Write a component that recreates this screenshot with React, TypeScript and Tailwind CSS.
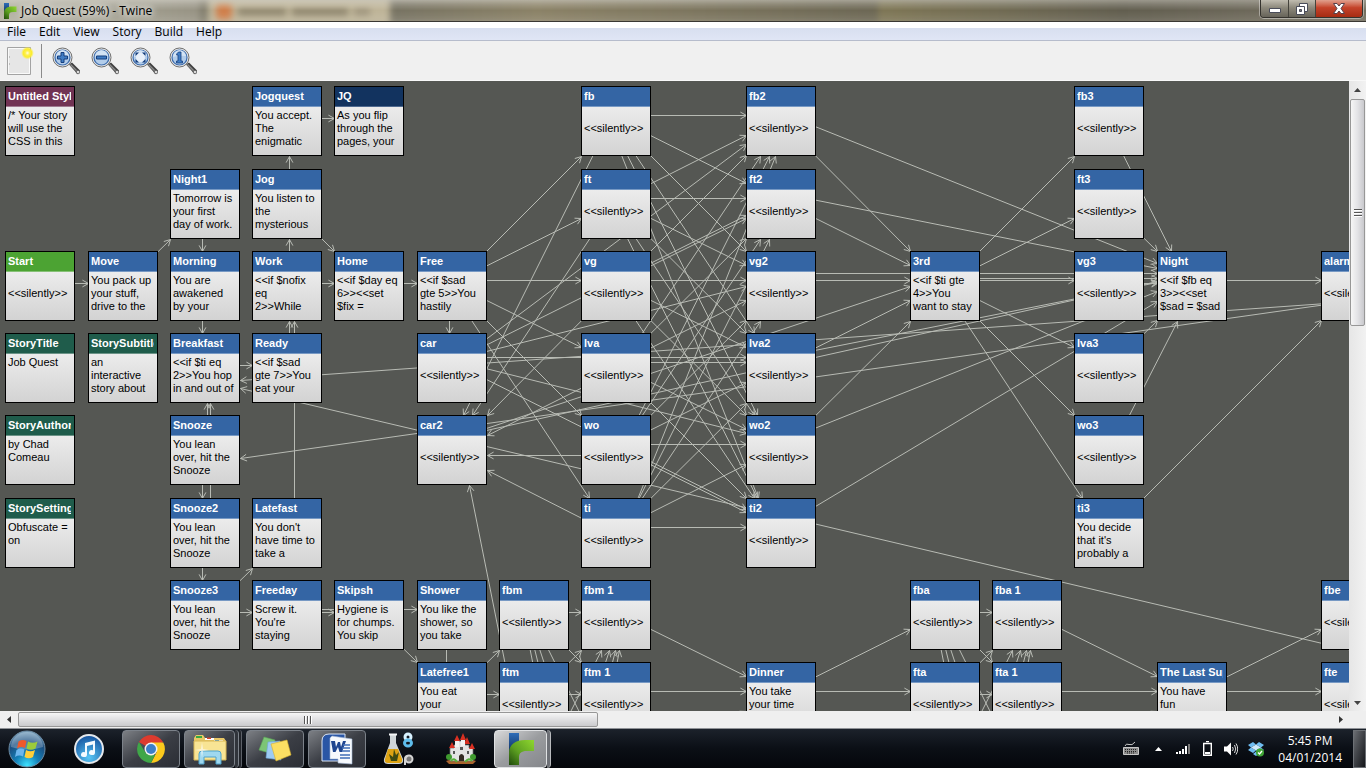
import type { ReactNode } from "react";

/* ─── Story map data ─── */
const STEP = [
  5, 88, 170, 252, 334, 417, 499, 581, 663, 746, 828, 910, 992, 1074, 1157, 1239, 1321, 1404, 1486,
  1568, 1650, 1733, 1815,
];
const SIZE = 70;
const SILENT = "\n<<silently>>";

type Kind = "passage" | "start" | "info" | "style" | "ending";

interface Passage {
  title: string;
  col: number;
  row: number;
  body?: string;
  kind?: Kind;
}

const passages: Passage[] = [
  { title: "Untitled Stylesheet", col: 0, row: 0, kind: "style", body: "/* Your story\nwill use the\nCSS in this" },
  { title: "Jogquest", col: 3, row: 0, body: "You accept.\nThe\nenigmatic" },
  { title: "JQ", col: 4, row: 0, kind: "ending", body: "As you flip\nthrough the\npages, your" },
  { title: "fb", col: 7, row: 0 },
  { title: "fb2", col: 9, row: 0 },
  { title: "fb3", col: 13, row: 0 },

  { title: "Night1", col: 2, row: 1, body: "Tomorrow is\nyour first\nday of work." },
  { title: "Jog", col: 3, row: 1, body: "You listen to\nthe\nmysterious" },
  { title: "ft", col: 7, row: 1 },
  { title: "ft2", col: 9, row: 1 },
  { title: "ft3", col: 13, row: 1 },

  { title: "Start", col: 0, row: 2, kind: "start" },
  { title: "Move", col: 1, row: 2, body: "You pack up\nyour stuff,\ndrive to the" },
  { title: "Morning", col: 2, row: 2, body: "You are\nawakened\nby your" },
  { title: "Work", col: 3, row: 2, body: "<<if $nofix\neq\n2>>While" },
  { title: "Home", col: 4, row: 2, body: "<<if $day eq\n6>><<set\n$fix =" },
  { title: "Free", col: 5, row: 2, body: "<<if $sad\ngte 5>>You\nhastily" },
  { title: "vg", col: 7, row: 2 },
  { title: "vg2", col: 9, row: 2 },
  { title: "3rd", col: 11, row: 2, body: "<<if $ti gte\n4>>You\nwant to stay" },
  { title: "vg3", col: 13, row: 2 },
  { title: "Night", col: 14, row: 2, body: "<<if $fb eq\n3>><<set\n$sad = $sad" },
  { title: "alarm", col: 16, row: 2 },

  { title: "StoryTitle", col: 0, row: 3, kind: "info", body: "Job Quest" },
  { title: "StorySubtitle", col: 1, row: 3, kind: "info", body: "an\ninteractive\nstory about" },
  { title: "Breakfast", col: 2, row: 3, body: "<<if $ti eq\n2>>You hop\nin and out of" },
  { title: "Ready", col: 3, row: 3, body: "<<if $sad\ngte 7>>You\neat your" },
  { title: "car", col: 5, row: 3 },
  { title: "lva", col: 7, row: 3 },
  { title: "lva2", col: 9, row: 3 },
  { title: "lva3", col: 13, row: 3 },

  { title: "StoryAuthor", col: 0, row: 4, kind: "info", body: "by Chad\nComeau" },
  { title: "Snooze", col: 2, row: 4, body: "You lean\nover, hit the\nSnooze" },
  { title: "car2", col: 5, row: 4 },
  { title: "wo", col: 7, row: 4 },
  { title: "wo2", col: 9, row: 4 },
  { title: "wo3", col: 13, row: 4 },

  { title: "StorySettings", col: 0, row: 5, kind: "info", body: "Obfuscate =\non" },
  { title: "Snooze2", col: 2, row: 5, body: "You lean\nover, hit the\nSnooze" },
  { title: "Latefast", col: 3, row: 5, body: "You don't\nhave time to\ntake a" },
  { title: "ti", col: 7, row: 5 },
  { title: "ti2", col: 9, row: 5 },
  { title: "ti3", col: 13, row: 5, body: "You decide\nthat it's\nprobably a" },

  { title: "Snooze3", col: 2, row: 6, body: "You lean\nover, hit the\nSnooze" },
  { title: "Freeday", col: 3, row: 6, body: "Screw it.\nYou're\nstaying" },
  { title: "Skipsh", col: 4, row: 6, body: "Hygiene is\nfor chumps.\nYou skip" },
  { title: "Shower", col: 5, row: 6, body: "You like the\nshower, so\nyou take" },
  { title: "fbm", col: 6, row: 6 },
  { title: "fbm 1", col: 7, row: 6 },
  { title: "fba", col: 11, row: 6 },
  { title: "fba 1", col: 12, row: 6 },
  { title: "fbe", col: 16, row: 6 },

  { title: "Latefree1", col: 5, row: 7, body: "You eat\nyour" },
  { title: "ftm", col: 6, row: 7 },
  { title: "ftm 1", col: 7, row: 7 },
  { title: "Dinner", col: 9, row: 7, body: "You take\nyour time" },
  { title: "fta", col: 11, row: 7 },
  { title: "fta 1", col: 12, row: 7 },
  { title: "The Last Supper", col: 14, row: 7, body: "You have\nfun" },
  { title: "fte", col: 16, row: 7 },
];

type Cell = [col: number, row: number];
type Link = [from: Cell, to: Cell];

const NIGHT: Cell = [14, 2];
const THIRD: Cell = [11, 2];
const FREE: Cell = [5, 2];
const CAR: Cell = [5, 3];
const CAR2: Cell = [5, 4];

const links: Link[] = [
  [[0, 2], [1, 2]],
  [[1, 2], [2, 1]],
  [[2, 1], [2, 2]],
  [[2, 2], [2, 3]],
  [[2, 3], [3, 3]],
  [[2, 4], [2, 3]],
  [[2, 5], [2, 3]],
  [[2, 4], [2, 5]],
  [[2, 5], [2, 6]],
  [[2, 6], [3, 6]],
  [[2, 6], [3, 5]],
  [[3, 5], [3, 2]],
  [[3, 3], [3, 2]],
  [[3, 2], [3, 1]],
  [[3, 2], [4, 2]],
  [[3, 1], [3, 0]],
  [[3, 1], [4, 2]],
  [[3, 0], [4, 0]],
  [[4, 2], FREE],
  [FREE, CAR],
  [CAR2, THIRD],
  [CAR2, NIGHT],
  [THIRD, NIGHT],
  [NIGHT, [16, 2]],
  [[13, 5], [16, 2]],
  [[16, 2], [2, 3]],
  [[16, 2], [2, 4]],
  [[19, 7], [2, 3]],
  [[6, 9], CAR2],
  [[3, 6], [4, 6]],
  [[3, 6], [5, 6]],
  [[4, 6], [5, 7]],
  [[5, 6], [5, 8]],
];

for (let r = 0; r < 6; r++) {
  links.push([FREE, [7, r]], [CAR, [9, r]], [[7, r], CAR2]);
  links.push([[9, r], NIGHT], [THIRD, [13, r]]);
  if (r < 5) links.push([[9, r], THIRD], [[13, r], NIGHT]);
  for (let s = 0; s < 6; s++) {
    links.push([[7, r], [9, s]], [[6, r + 6], [7, s + 6]], [[11, r + 6], [12, s + 6]]);
  }
}
for (let r = 6; r < 9; r++) {
  links.push([[5, 7], [6, r]], [[7, r], [9, 7]], [[9, 7], [11, r]]);
  links.push([[12, r], [14, 7]], [[14, 7], [16, r]]);
}

/* ─── Connectors ─── */
function connectorPath([from, to]: Link) {
  let ax = STEP[from[0]] + SIZE / 2;
  let ay = STEP[from[1]] + SIZE / 2;
  let bx = STEP[to[0]] + SIZE / 2;
  let by = STEP[to[1]] + SIZE / 2;

  // nudge each direction to its own side so two-way links stay apart
  const nudge = Math.min(Math.hypot(bx - ax, by - ay) / 32, 16);
  const sx = Math.sign(ay - by) * nudge;
  const sy = Math.sign(ax - bx) * nudge;
  ax += sx;
  bx += sx;
  ay += sy;
  by += sy;

  // stop at the edge of the target box
  const dx = bx - ax;
  const dy = by - ay;
  const left = STEP[to[0]];
  const top = STEP[to[1]];
  const tx = dx ? ((dx > 0 ? left : left + SIZE) - ax) / dx : 0;
  const ty = dy ? ((dy > 0 ? top : top + SIZE) - ay) / dy : 0;
  const t = Math.max(tx, ty);
  const ex = Math.floor(ax + dx * t) + 0.5;
  const ey = Math.floor(ay + dy * t) + 0.5;

  const angle = Math.atan2(dy, dx);
  const wing = (turn: number) =>
    `${(ex - 7 * Math.cos(angle + turn)).toFixed(1)} ${(ey - 7 * Math.sin(angle + turn)).toFixed(1)}`;

  return `M${Math.floor(ax) + 0.5} ${Math.floor(ay) + 0.5}L${ex} ${ey}M${wing(0.5)}L${ex} ${ey}L${wing(-0.5)}`;
}

function Connectors() {
  return (
    <svg className="absolute left-0 top-0 h-[1000px] w-[1900px]" fill="none" stroke="#b8bbb4">
      {links.map((link, i) => (
        <path key={i} d={connectorPath(link)} />
      ))}
    </svg>
  );
}

/* ─── Passage box ─── */
const titleColors: Record<Kind, string> = {
  passage: "bg-[#3465a4] border-[#7799c4]",
  start: "bg-[#4ca333] border-[#86c176]",
  info: "bg-[#1f5c4b] border-[#6b9387]",
  style: "bg-[#713353] border-[#a07a90]",
  ending: "bg-[#12335f] border-[#4f6a90]",
};

function PassageBox({ title, col, row, body = SILENT, kind = "passage" }: Passage) {
  return (
    <article
      className="absolute h-[70px] w-[70px] overflow-hidden border border-black bg-linear-to-b from-[#f6f6f6] to-[#d3d3d3] text-[11px] leading-[13px]"
      style={{ left: STEP[col], top: STEP[row] }}
    >
      <h2 className={`h-5 border-b pl-0.5 pr-[3px] pt-[3px] font-bold text-white ${titleColors[kind]}`}>
        <span className="block overflow-hidden whitespace-nowrap">{title}</span>
      </h2>
      <p className="overflow-hidden whitespace-pre pl-0.5 pt-0.5 text-black">{body}</p>
    </article>
  );
}

/* ─── Title bar ─── */
function TwineLogo({ className }: { className: string }) {
  return (
    <svg className={className} viewBox="0 0 26 32">
      <defs>
        <linearGradient id="twineGreen" x1="1" y1="0" x2="0" y2="1">
          <stop offset="0" stopColor="#8fd62f" />
          <stop offset="0.55" stopColor="#5da021" />
          <stop offset="1" stopColor="#1f4a0c" />
        </linearGradient>
        <linearGradient id="twineBlue" x1="0" y1="0" x2="0" y2="1">
          <stop offset="0" stopColor="#2f6db8" />
          <stop offset="1" stopColor="#0d2c5c" />
        </linearGradient>
      </defs>
      <path d="M1 0H11V20H1z" fill="url(#twineBlue)" />
      <path d="M1 32V20C1 11 8 7 17 7H26V18H19C13 18 11 20 11 25V32z" fill="url(#twineGreen)" />
    </svg>
  );
}

function TitleBar() {
  return (
    <header className="relative flex h-[22px] shrink-0 overflow-hidden border-b border-[#3a3833] bg-linear-to-r from-[#b5b1a2] via-[#9b9684] to-[#6f6a58]">
      <div className="absolute inset-0 flex blur-[3px]" aria-hidden="true">
        <div className="h-6 w-[200px] bg-linear-to-r from-[#b5b3a4] to-[#979384]" />
        <div className="h-6 w-2 bg-[#817d6c]" />
        <div className="flex h-6 w-[182px] items-center gap-1.5 bg-[#beb498] px-2">
          <span className="h-4 w-4 rounded bg-[#cf7f4b]" />
          <span className="h-2 w-12 bg-[#8f866e]" />
          <span className="h-2 w-14 bg-[#8f866e]" />
          <span className="h-2 w-4 bg-[#a0967e]" />
        </div>
        <div className="h-6 flex-1 bg-linear-to-r from-[#777363] via-[#8b8267] via-30% to-[#6c6754]" />
        <div className="h-6 flex-1 bg-linear-to-r from-[#7f7756] via-[#625e4f] to-[#777264]" />
      </div>
      <div className="absolute inset-0 bg-linear-to-b from-white/30 via-transparent to-white/10" />
      <div className="relative flex items-center gap-1 pl-[3px]">
        <TwineLogo className="h-4 w-[14px]" />
        <h1 className="text-xs text-black [text-shadow:0_0_6px_#fff,0_0_10px_#fff]">Job Quest (59%) - Twine</h1>
      </div>
      <div className="relative ml-auto mr-[3px] flex h-[18px] overflow-hidden rounded-b border border-t-0 border-[#35332e] shadow-[0_0_0_1px_rgba(255,255,255,0.4)]">
        <button aria-label="Minimize" className="flex w-7 items-center justify-center border-r border-[#45433c] bg-linear-to-b from-[#c0bcb0] via-[#8d897c] via-45% to-[#67645a]">
          <svg className="mt-1 h-[5px] w-3" viewBox="0 0 12 5">
            <path d="M.5.5H11.5V4.5H.5z" fill="#fff" stroke="#4a4d5a" />
          </svg>
        </button>
        <button aria-label="Restore" className="flex w-[27px] items-center justify-center border-r border-[#45433c] bg-linear-to-b from-[#c0bcb0] via-[#8d897c] via-45% to-[#67645a]">
          <svg className="h-3 w-3" viewBox="0 0 12 12" stroke="#4a4d5a">
            <path d="M3.500.5H11.500V8.500H3.500z" fill="#fff" />
            <path d="M.5 3.500H8.500V11.500H.5z" fill="#fff" />
            <path d="M3.500 6.500H5.500V8.500H3.500z" fill="#777" />
          </svg>
        </button>
        <button aria-label="Close" className="flex w-[46px] items-center justify-center bg-linear-to-b from-[#e0a08e] via-[#c4432a] via-45% to-[#a62b12]">
          <svg className="h-[11px] w-3" viewBox="0 0 12 11">
            <path d="M.5.5H4L6 3 8 .5H11.500L8 5.500 11.500 10.500H8L6 8 4 10.500H.5L4 5.500z" fill="#fff" stroke="#56404a" />
          </svg>
        </button>
      </div>
    </header>
  );
}

/* ─── Menu and toolbar ─── */
function MenuBar() {
  return (
    <nav className="flex h-[19px] shrink-0 gap-px border-b border-[#b6bccc] bg-linear-to-b from-white from-35% via-[#d8dff0] via-36% to-[#e0e6f5] pl-px text-xs text-black">
      {["File", "Edit", "View", "Story", "Build", "Help"].map((item) => (
        <button key={item} className="px-1.5 leading-5">
          {item}
        </button>
      ))}
    </nav>
  );
}

function Magnifier({ children }: { children: ReactNode }) {
  return (
    <svg className="h-7 w-7" viewBox="0 0 28 28">
      <path d="M17 17.500L20 15.500 28 23.500 25.500 27z" fill="#3f3f3f" />
      <path d="M18.500 17.500L26 25" stroke="#8b8b8b" strokeWidth="1.500" />
      <circle cx="26" cy="25" r="1.800" fill="#d9d9d9" stroke="#444" strokeWidth=".7" />
      <circle cx="10.500" cy="10.500" r="9.500" fill="#e9e9e9" stroke="#6f6f6f" />
      <circle cx="10.500" cy="10.500" r="7.500" fill="#b3cdea" stroke="#3c6cae" strokeWidth="1.200" />
      <path d="M4 10A6.500 6.500 0 0 1 17 9Q10 8 4 10z" fill="#dbe8f6" opacity=".8" />
      {children}
    </svg>
  );
}

function Toolbar() {
  return (
    <div className="flex h-10 shrink-0 items-center border-b border-[#f8f8f8] bg-[#f0f0f0] pl-1.5" role="toolbar">
      <button aria-label="New passage">
        <svg className="h-7 w-7" viewBox="0 0 28 28">
          <defs>
            <radialGradient id="glow">
              <stop offset="0" stopColor="#fffde0" />
              <stop offset=".35" stopColor="#fff04a" />
              <stop offset=".65" stopColor="#fbec2c" />
              <stop offset="1" stopColor="#fdf24a" stopOpacity="0" />
            </radialGradient>
          </defs>
          <path d="M1.500.5H24.500V27.500H1.500z" fill="#e6e6e6" stroke="#a3a3a3" />
          <path d="M2.500 1.500H23.500V26.500H2.500z" stroke="#fafafa" fill="none" />
          <path d="M3 10H4M3 17H4" stroke="#999" />
          <circle cx="21.500" cy="6" r="6.500" fill="url(#glow)" />
        </svg>
      </button>
      <div className="ml-[7px] mr-2.5 h-[34px] w-px bg-[#8a8a8a]" />
      <div className="flex gap-[11px]">
        <button aria-label="Zoom in">
          <Magnifier>
            <path d="M9 5.500H12V9H15.500V12H12V15.500H9V12H5.500V9H9z" fill="#3f7cc4" stroke="#173f7d" />
          </Magnifier>
        </button>
        <button aria-label="Zoom out">
          <Magnifier>
            <path d="M5.500 9H15.500V12H5.500z" fill="#3f7cc4" stroke="#173f7d" />
          </Magnifier>
        </button>
        <button aria-label="Zoom to fit">
          <Magnifier>
            <circle cx="10.500" cy="10.500" r="4.500" fill="#e8f0fa" />
            <path d="M5.500 5.500H9L5.500 9zM15.500 5.500V9L12 5.500zM5.500 15.500V12L9 15.500zM15.500 15.500H12L15.500 12z" fill="#173f7d" />
          </Magnifier>
        </button>
        <button aria-label="Zoom to 100%">
          <Magnifier>
            <path d="M8 6.500L9.500 5H12V14H13.500V16H7.500V14H9V8H7.500z" fill="#3f7cc4" stroke="#173f7d" strokeWidth=".8" />
          </Magnifier>
        </button>
      </div>
    </div>
  );
}

/* ─── Scrollbars ─── */
function VerticalScrollbar() {
  return (
    <div className="flex w-[17px] shrink-0 flex-col items-center bg-linear-to-r from-[#e6e6e6] to-[#f2f2f2]">
      <button aria-label="Scroll up" className="flex h-[18px] w-full items-center justify-center">
        <svg className="h-1 w-[7px]" viewBox="0 0 7 4">
          <path d="M0 4L3.500 0 7 4z" fill="#444" />
        </svg>
      </button>
      <div className="flex h-[227px] w-[15px] flex-col items-center justify-center gap-px rounded-xs border border-[#979797] bg-linear-to-r from-[#f6f6f6] via-[#e3e3e6] to-[#c9c9cd]">
        <span className="h-0.5 w-2 border-b border-white bg-[#555]" />
        <span className="h-0.5 w-2 border-b border-white bg-[#555]" />
        <span className="h-0.5 w-2 border-b border-white bg-[#555]" />
      </div>
      <button aria-label="Scroll down" className="mt-auto flex h-[17px] w-full items-center justify-center">
        <svg className="h-1 w-[7px]" viewBox="0 0 7 4">
          <path d="M0 0H7L3.500 4z" fill="#444" />
        </svg>
      </button>
    </div>
  );
}

function HorizontalScrollbar() {
  return (
    <div className="flex h-[17px] shrink-0 items-center bg-[#efefef] pr-[17px]">
      <button aria-label="Scroll left" className="flex h-full w-[18px] items-center justify-center">
        <svg className="h-[7px] w-1" viewBox="0 0 4 7">
          <path d="M4 0V7L0 3.500z" fill="#333" />
        </svg>
      </button>
      <div className="flex h-[15px] w-[43%] items-center justify-center gap-px rounded-xs border border-[#979797] bg-linear-to-b from-[#f6f6f6] via-[#e0e0e2] to-[#cbcbce]">
        <span className="h-2 w-0.5 border-r border-white bg-[#555]" />
        <span className="h-2 w-0.5 border-r border-white bg-[#555]" />
        <span className="h-2 w-0.5 border-r border-white bg-[#555]" />
      </div>
      <button aria-label="Scroll right" className="ml-auto flex h-full w-[17px] items-center justify-center">
        <svg className="h-[7px] w-1" viewBox="0 0 4 7">
          <path d="M0 0V7L4 3.500z" fill="#333" />
        </svg>
      </button>
    </div>
  );
}

/* ─── Taskbar icons ─── */
function StartOrb() {
  return (
    <svg className="h-[38px] w-[38px]" viewBox="0 0 38 38">
      <defs>
        <radialGradient id="orb" cx=".5" cy=".95" r=".95">
          <stop offset="0" stopColor="#3fe3ff" />
          <stop offset=".35" stopColor="#1480b8" />
          <stop offset=".7" stopColor="#1b4e80" />
          <stop offset="1" stopColor="#7fa8c4" />
        </radialGradient>
      </defs>
      <circle cx="19" cy="19" r="18" fill="url(#orb)" stroke="#6d8ca3" />
      <path d="M3 17A16 15 0 0 1 35 17Q19 22 3 17z" fill="#fff" opacity=".25" />
      <path d="M10.500 11.500Q14.500 9 18.500 11L17 18Q13 16 9 18.500z" fill="#f0592b" />
      <path d="M20 11.500Q24.500 14 29.500 11.500L27.500 18.500Q23 21 18.500 18.500z" fill="#9ccb3b" />
      <path d="M8.500 20Q12.500 17.500 16.500 19.500L15 26.500Q11 24.500 7 27z" fill="#6cb6ee" />
      <path d="M18 20Q22.500 22.500 27 20L25 27Q21 29.500 16.500 27z" fill="#ffcf3a" />
    </svg>
  );
}

function ITunesIcon() {
  return (
    <svg className="h-[30px] w-[30px]" viewBox="0 0 30 30">
      <defs>
        <radialGradient id="itunes" cx=".5" cy=".8" r=".8">
          <stop offset="0" stopColor="#58c6f5" />
          <stop offset="1" stopColor="#14509c" />
        </radialGradient>
      </defs>
      <circle cx="15" cy="15" r="14" fill="url(#itunes)" stroke="#e4e8ec" strokeWidth="2" />
      <path d="M11 9L21 6.500V18.500A3 2.500 0 1 1 19 16.200V10.500L13 12V20.500A3 2.500 0 1 1 11 18.200z" fill="#f5fbff" />
    </svg>
  );
}

function ChromeIcon() {
  return (
    <svg className="h-[30px] w-[30px]" viewBox="0 0 30 30">
      <path d="M15 15L2.900 8A14 14 0 0 1 27.100 8z" fill="#dd3b2e" />
      <path d="M15 8.500H27.300A14 14 0 0 1 15 29L20.600 18.300z" fill="#fbc91c" />
      <path d="M9.400 18.200L2.900 8A14 14 0 0 0 15 29L19 21z" fill="#3fa648" />
      <circle cx="15" cy="15" r="6.500" fill="#f2f2f2" />
      <circle cx="15" cy="15" r="5" fill="#3c7fc9" />
    </svg>
  );
}

function ExplorerIcon() {
  return (
    <svg className="h-[32px] w-[34px]" viewBox="0 0 34 32">
      <path d="M1 5L3 2H10L12 5H31L33 8V25H1z" fill="#e8c766" />
      <path d="M3 3H9V5H3z" fill="#35a843" />
      <path d="M12 5H21V7H12z" fill="#fff" />
      <path d="M14 4.500H18V6H14z" fill="#d9452f" />
      <path d="M21 7H30V9H21z" fill="#fff" />
      <path d="M22 7H26V8.500H22z" fill="#2f8ee0" />
      <path d="M1 8H33V27H1z" fill="#f8e494" stroke="#d7b654" />
      <path d="M6 31V21Q6 18 9 18H25Q28 18 28 21V31H23V24H11V31z" fill="#9fd8ef" stroke="#4fa3cc" />
      <path d="M9 9L10 16 16 17 10 18 9 25 8 18 2 17 8 16z" fill="#fff" opacity=".6" />
    </svg>
  );
}

function StickyNotesIcon() {
  return (
    <svg className="h-7 w-[34px]" viewBox="0 0 34 28">
      <path d="M6 2L17 5 15 19 1 15z" fill="#7cc576" stroke="#5da857" strokeWidth=".6" />
      <path d="M10 7L22 6 23 25 8 23z" fill="#9dcbf2" stroke="#6ba6d9" strokeWidth=".6" />
      <path d="M13 9L29 5 33 20 18 26z" fill="#fbdf63" stroke="#d3ae2d" strokeWidth=".6" />
    </svg>
  );
}

function WordIcon() {
  return (
    <svg className="h-8 w-8" viewBox="0 0 32 32">
      <path d="M1 8Q1 1 8 1H24V28H1z" fill="#2a56a5" stroke="#dbe5f4" />
      <path d="M11 3L31 6V31L17 30V26H9V5z" fill="#f6f9fd" stroke="#9fb4d2" strokeWidth=".6" />
      <path d="M10 8H14L15 14 17 9H19L20 14 22 8H25L21 19H18.500L17 14 14.500 19H12z" fill="#1e4590" />
      <path d="M22 12H29M21 15H29M21 18H29M19 22H29M19 25H29" stroke="#3f6cb5" strokeWidth="1.300" />
    </svg>
  );
}

function GameMakerIcon() {
  return (
    <svg className="h-[34px] w-8" viewBox="0 0 32 34">
      <path d="M7 3H13V11L20 27Q21 32 16 32H5Q0 32 1 27L7 11z" fill="#cfd5d8" />
      <path d="M5 17H15L19 27Q20 31 16 31H5Q1 31 2 27z" fill="#dda313" />
      <path d="M8 29L6 22 10 25 11 17 13 23 16 20 14 29z" fill="#3d4a12" />
      <path d="M6 1.500H14V3.500H6z" fill="#f4f6f7" />
      <ellipse cx="25" cy="5" rx="3" ry="3" fill="none" stroke="#d8f2ff" strokeWidth="3" />
      <ellipse cx="25" cy="11" rx="3.500" ry="3" fill="none" stroke="#5ebdec" strokeWidth="3" />
      <circle cx="26" cy="27" r="3.500" fill="#777" stroke="#d5d5d5" strokeWidth="2" />
      <path d="M22 33V27Q22 24 25 24" fill="none" stroke="#d5d5d5" strokeWidth="2" />
    </svg>
  );
}

function CastleIcon() {
  return (
    <svg className="h-8 w-8" viewBox="0 0 32 32">
      <path d="M1 28Q16 22 31 28L28 31H4z" fill="#a8632c" />
      <path d="M5 15H9V12H13V8H20V12H24V15H28V28H5z" fill="#e3e3e3" stroke="#6d6d6d" strokeWidth=".7" />
      <path d="M4 15L7 9 10 15zM9 8L12 2 15 8zM15 7L18 0 21 7zM19 11L22 4 25 11zM24 16L27 10 30 16z" fill="#d83022" />
      <path d="M10 8H14V14H10zM16 7H20V13H16z" fill="#f2f2f2" />
      <path d="M14 28V23Q16.500 19 19 23V28z" fill="#332a24" />
      <path d="M8 18H10V21H8zM22 18H24V21H22zM15 14H18V17H15z" fill="#555" />
      <circle cx="4" cy="24" r="3" fill="#3f9a2f" />
      <circle cx="28" cy="24" r="3" fill="#3f9a2f" />
      <path d="M6 28Q9 24 12 29M20 29Q24 24 27 28" stroke="#57b13c" strokeWidth="2" fill="none" />
    </svg>
  );
}

/* ─── Taskbar ─── */
interface TaskButtonProps {
  label: string;
  children: ReactNode;
  className?: string;
}

function TaskButton({ label, children, className = "w-[58px]" }: TaskButtonProps) {
  return (
    <button
      aria-label={label}
      className={`flex h-[38px] items-center justify-center rounded-sm border border-[#7c828a] bg-linear-to-br from-[#7d8085] via-[#3b3e45] via-50% to-[#2b2e35] ${className}`}
    >
      {children}
    </button>
  );
}

function Tray() {
  return (
    <div className="ml-auto flex h-full items-center">
      <svg className="mr-4 h-4 w-4" viewBox="0 0 16 16" fill="none" stroke="#c8c8c8">
        <path d="M2 5Q3 2 6 3.500T12 1" />
        <path d="M.5 6.500H15.500V13.500H.5z" fill="#8c8c8c" />
        <path d="M2 8.500H14M2 10.500H14M4 12H12" stroke="#222" strokeDasharray="1 1" />
      </svg>
      <button aria-label="Show hidden icons" className="mr-[14px]">
        <svg className="h-1 w-[7px]" viewBox="0 0 7 4">
          <path d="M0 4L3.500 0 7 4z" fill="#fff" />
        </svg>
      </button>
      <svg className="mr-3 h-3 w-[15px]" viewBox="0 0 15 12" fill="#fff">
        <path d="M0 9H2V11H0zM3 8H5V11H3zM6 6H8V11H6zM9 3H11V11H9z" />
        <path d="M12 1H14V11H12z" fill="#777" />
      </svg>
      <svg className="mr-3 h-[15px] w-[9px]" viewBox="0 0 9 15" fill="none" stroke="#fff">
        <path d="M3 .5H6" strokeWidth="1.500" />
        <path d="M.7 2.500H8.300V14.300H.7z" strokeWidth="1.400" />
        <path d="M2 12H7" strokeWidth="2" />
      </svg>
      <svg className="mr-2.5 h-[14px] w-[14px]" viewBox="0 0 14 14" fill="none" stroke="#ddd">
        <path d="M0 4.500H3L7 .5V13.500L3 9.500H0z" fill="#fff" stroke="none" />
        <path d="M8.500 5Q10 7 8.500 9M10.500 3Q13 7 10.500 11M12 1.500Q15.500 7 12 12.500" />
      </svg>
      <svg className="mr-[14px] h-4 w-4" viewBox="0 0 16 16">
        <path d="M5 1L0 4 3 6.500 8 3.500zM11 1L16 4 13 6.500 8 3.500zM0 9L5 12 8 9.500 3 6.500zM16 9L11 12 8 9.500 13 6.500zM5 13L8 10.500 11 13 8 15z" fill="#6fbdf2" />
        <path d="M8 3.500L13 6.500 8 9.500 3 6.500z" fill="#cfe9fb" />
        <circle cx="12" cy="11.500" r="4" fill="#3fa535" />
        <path d="M10 11.500L11.500 13 14 10" stroke="#fff" strokeWidth="1.300" fill="none" />
      </svg>
      <time className="mr-[11px] text-center text-xs leading-[17px] text-white">
        5:45 PM
        <br />
        04/01/2014
      </time>
      <button aria-label="Show desktop" className="h-[38px] w-[13px] border border-[#6c7075] bg-linear-to-br from-[#6b6e73] to-[#15171b]" />
    </div>
  );
}

function Taskbar() {
  return (
    <footer className="flex h-10 shrink-0 items-center border-t border-[#8e9196] bg-linear-to-b from-[#1c222b] via-[#0b0f16] to-[#05070b] pl-2">
      <button aria-label="Start" className="mr-[28px]">
        <StartOrb />
      </button>
      <button aria-label="iTunes" className="mr-[18px]">
        <ITunesIcon />
      </button>
      <div className="flex gap-1">
        <TaskButton label="Google Chrome">
          <ChromeIcon />
        </TaskButton>
        <div className="flex">
          <TaskButton label="Windows Explorer" className="w-[51px]">
            <ExplorerIcon />
          </TaskButton>
          <span className="h-[38px] w-1 rounded-r-sm border-r border-[#7c828a] bg-[#30343b]" />
          <span className="h-[38px] w-[3px] rounded-r-sm border-r border-[#5c6068] bg-[#22252b]" />
        </div>
        <TaskButton label="Sticky Notes">
          <StickyNotesIcon />
        </TaskButton>
        <TaskButton label="Microsoft Word">
          <WordIcon />
        </TaskButton>
      </div>
      <button aria-label="GameMaker 8" className="ml-[17px] mr-[30px]">
        <GameMakerIcon />
      </button>
      <button aria-label="Castle">
        <CastleIcon />
      </button>
      <div className="ml-[17px] flex">
        <button
          aria-label="Twine"
          className="flex h-[38px] w-[53px] items-center justify-center rounded-sm border border-[#dfe1e3] bg-linear-to-br from-[#d8d9da] via-[#9a9c9f] to-[#85878b]"
        >
          <TwineLogo className="h-8 w-[26px]" />
        </button>
        <span className="h-[38px] w-1 rounded-r-sm border-r border-[#b9bbbe] bg-[#6d7076]" />
      </div>
      <Tray />
    </footer>
  );
}

export default function App() {
  return (
    <div className="flex h-screen flex-col overflow-hidden bg-[#f0f0f0] font-['Open_Sans',sans-serif]">
      <TitleBar />
      <MenuBar />
      <Toolbar />
      <div className="flex min-h-0 flex-1">
        <main className="relative min-w-0 flex-1 overflow-hidden bg-[#555753] font-['Liberation_Sans',Arial,sans-serif]">
          <Connectors />
          {passages.map((p) => (
            <PassageBox key={p.title} {...p} />
          ))}
        </main>
        <VerticalScrollbar />
      </div>
      <HorizontalScrollbar />
      <Taskbar />
    </div>
  );
}
